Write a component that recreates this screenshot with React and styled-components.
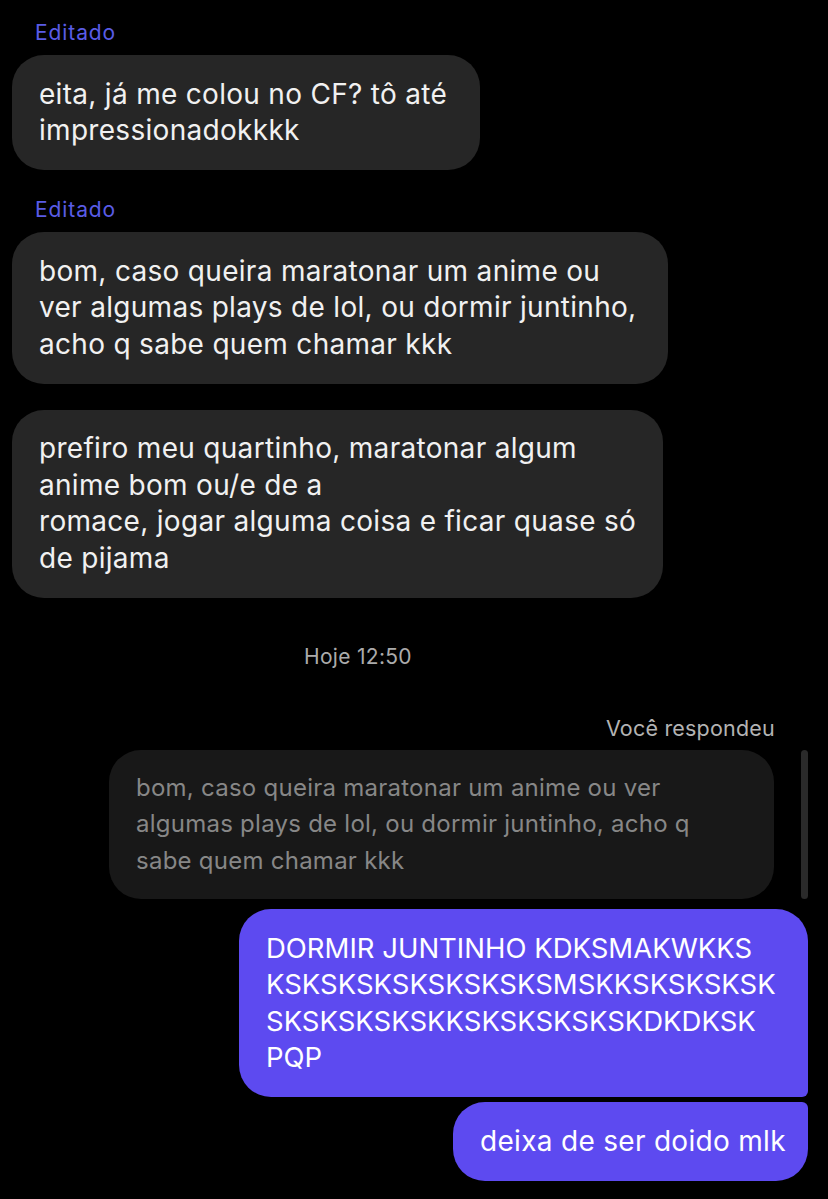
import React from 'react';
import styled, { createGlobalStyle } from 'styled-components';

const Global = createGlobalStyle`
  html, body {
    margin: 0;
    padding: 0;
    background: #000;
  }
  body {
    font-family: Inter, Roboto, "Noto Sans", sans-serif;
    -webkit-font-smoothing: antialiased;
  }
`;

const Screen = styled.div`
  width: 828px;
  height: 1199px;
  overflow: hidden;
  background: #000;
  display: flex;
  flex-direction: column;
  padding: 21px 20px 0 12px;
  box-sizing: border-box;
`;

const EditedLabel = styled.div`
  margin: ${(p) => p.$top || 0}px 0 10px 23px;
  font-size: 21px;
  letter-spacing: 0.9px;
  line-height: 24px;
  color: #5a5ce6;
`;

const Bubble = styled.div`
  width: ${(p) => p.$width}px;
  box-sizing: border-box;
  margin-top: ${(p) => p.$top || 0}px;
  padding: 20.5px 27px 21.5px;
  background: #262626;
  color: #f1f1f1;
  border-radius: 32px;
  font-size: ${(p) => (p.$caps ? '27.5px' : '28px')};
  letter-spacing: ${(p) => (p.$caps ? '0' : '0.3px')};
  line-height: 36.5px;
  white-space: pre;
`;

const MineBubble = styled(Bubble)`
  align-self: flex-end;
  background: #5d4af0;
  color: #fff;
  border-radius: ${(p) => (p.$first ? '32px 32px 6px 32px' : '32px 6px 32px 32px')};
`;

const DayStamp = styled.div`
  margin: 47px 0 0 292px;
  font-size: 21px;
  letter-spacing: 0.3px;
  line-height: 24px;
  color: #ababab;
`;

const ReplyLabel = styled.div`
  align-self: flex-end;
  margin: 47px 33px 10px 0;
  font-size: 21.5px;
  letter-spacing: 0.2px;
  line-height: 24px;
  color: #b3b3b3;
`;

const ReplyRow = styled.div`
  display: flex;
  justify-content: flex-end;
  gap: 27px;
  margin-bottom: 10px;
`;

const Quote = styled.div`
  width: 665px;
  box-sizing: border-box;
  padding: 20px 27px;
  background: #181818;
  color: #878787;
  border-radius: 32px;
  font-size: 24px;
  letter-spacing: 0.25px;
  line-height: 36.5px;
  white-space: pre;
`;

const ReplyBar = styled.div`
  width: 7px;
  border-radius: 4px;
  background: #2a2a2a;
`;

export default function App() {
  return (
    <Screen>
      <Global />
      <EditedLabel>Editado</EditedLabel>
      <Bubble $width={468}>{'eita, já me colou no CF? tô até\nimpressionadokkkk'}</Bubble>

      <EditedLabel $top={28}>Editado</EditedLabel>
      <Bubble $width={656}>
        {'bom, caso queira maratonar um anime ou\nver algumas plays de lol, ou dormir juntinho,\nacho q sabe quem chamar kkk'}
      </Bubble>

      <Bubble $width={651} $top={26}>
        {'prefiro meu quartinho, maratonar algum\nanime bom ou/e de a\nromace, jogar alguma coisa e ficar quase só\nde pijama'}
      </Bubble>

      <DayStamp>Hoje 12:50</DayStamp>

      <ReplyLabel>Você respondeu</ReplyLabel>
      <ReplyRow>
        <Quote>
          {'bom, caso queira maratonar um anime ou ver\nalgumas plays de lol, ou dormir juntinho, acho q\nsabe quem chamar kkk'}
        </Quote>
        <ReplyBar />
      </ReplyRow>

      <MineBubble $width={569} $first $caps>
        {'DORMIR JUNTINHO KDKSMAKWKKS\nKSKSKSKSKSKSKSKSMSKKSKSKSKSK\nSKSKSKSKSKKSKSKSKSKSKDKDKSK\nPQP'}
      </MineBubble>
      <MineBubble $width={355} $top={5}>deixa de ser doido mlk</MineBubble>
    </Screen>
  );
}
